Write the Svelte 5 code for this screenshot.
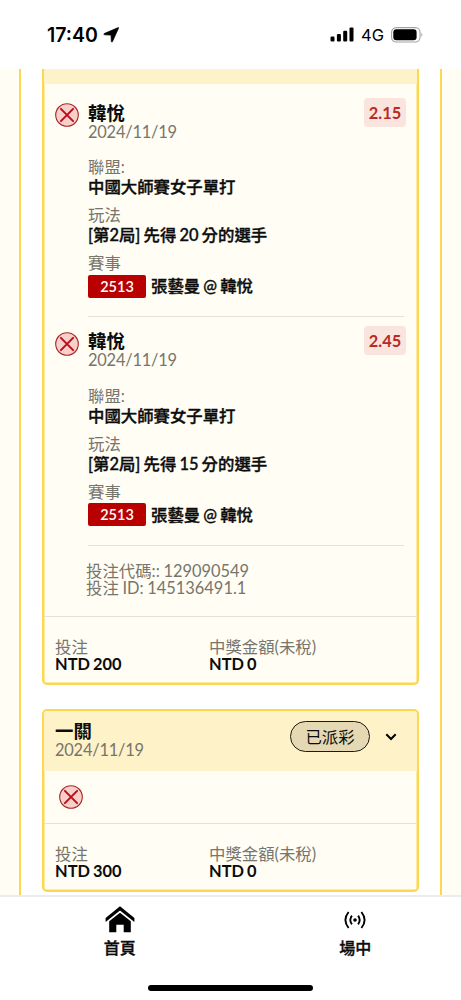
<script>
  const legs = [
    {
      player: '韓悅',
      date: '2024/11/19',
      odds: '2.15',
      league: '中國大師賽女子單打',
      market: '[第2局] 先得 20 分的選手',
      code: '2513',
      match: '張藝曼 @ 韓悅'
    },
    {
      player: '韓悅',
      date: '2024/11/19',
      odds: '2.45',
      league: '中國大師賽女子單打',
      market: '[第2局] 先得 15 分的選手',
      code: '2513',
      match: '張藝曼 @ 韓悅'
    }
  ];

  let activeTab = $state('home');
</script>

{#snippet lostIcon()}
  <svg class="lost" viewBox="0 0 24 24" width="24" height="24">
    <circle cx="12" cy="12" r="11.3" fill="#f9cfca" stroke="#a8262a" stroke-width="1.1" />
    <path d="M5.9 5.9 18.1 18.1M18.1 5.9 5.9 18.1" stroke="#b8101a" stroke-width="2" stroke-linecap="round" />
  </svg>
{/snippet}

{#snippet totals(stake, payout)}
  <div class="totals">
    <div class="total stake">
      <span class="label">投注</span>
      <span class="amount">NTD {stake}</span>
    </div>
    <div class="total">
      <span class="label">中獎金額(未稅)</span>
      <span class="amount">NTD {payout}</span>
    </div>
  </div>
{/snippet}

<div class="screen">
  <header class="status-bar">
    <div class="clock">
      <span>17:40</span>
      <svg viewBox="0 0 16 16" width="16" height="16">
        <path d="M15.2.6Q15.9.3 15.5 1.2L9.5 14.6Q8.8 15.8 8.3 14.4L8 8.1 1.4 7.8Q.2 7.2 1.3 6.5Z" fill="#000" stroke="#000" stroke-width=".7" stroke-linejoin="round" />
      </svg>
    </div>
    <div class="signals">
      <svg viewBox="0 0 24 15" width="24" height="15">
        <rect x=".5" y="9.6" width="4" height="4.9" rx="1.1" />
        <rect x="6.9" y="6.9" width="4" height="7.6" rx="1.1" />
        <rect x="13.2" y="3.7" width="4" height="10.8" rx="1.1" />
        <rect x="19.5" y=".5" width="4" height="14" rx="1.1" />
      </svg>
      <span>4G</span>
      <svg viewBox="0 0 33 16" width="33" height="16">
        <rect x=".6" y=".6" width="28.4" height="14.4" rx="4.6" fill="none" stroke="#a3a3a3" stroke-width="1.1" />
        <rect x="2.3" y="2.3" width="23.3" height="11" rx="3" />
        <path d="M30.4 5.5q2 2.3 0 4.6z" fill="#a3a3a3" />
      </svg>
    </div>
  </header>

  <main>
    <div class="column">
      <section class="ticket open">
        <div class="strip"></div>
        <div class="legs">
          {#each legs as leg}
            <div class="leg">
              {@render lostIcon()}
              <div class="leg-body">
                <div class="leg-head">
                  <div>
                    <div class="name">{leg.player}</div>
                    <div class="date">{leg.date}</div>
                  </div>
                  <span class="odds">{leg.odds}</span>
                </div>
                <div class="field">
                  <div class="label">聯盟:</div>
                  <div class="value">{leg.league}</div>
                </div>
                <div class="field">
                  <div class="label">玩法</div>
                  <div class="value">{leg.market}</div>
                </div>
                <div class="field">
                  <div class="label">賽事</div>
                  <div class="value match">
                    <span class="code">{leg.code}</span>
                    <span>{leg.match}</span>
                  </div>
                </div>
              </div>
            </div>
          {/each}
        </div>
        <div class="ids">
          <div>投注代碼:: 129090549</div>
          <div>投注 ID: 145136491.1</div>
        </div>
        {@render totals(200, 0)}
      </section>

      <section class="ticket">
        <div class="ticket-head">
          <div>
            <div class="name">一關</div>
            <div class="date">2024/11/19</div>
          </div>
          <div class="ticket-state">
            <span class="badge">已派彩</span>
            <svg viewBox="0 0 12 8" width="12" height="8">
              <path d="M1.3 1.3 6 6 10.7 1.3" fill="none" stroke="#000" stroke-width="2" />
            </svg>
          </div>
        </div>
        <div class="results">{@render lostIcon()}</div>
        {@render totals(300, 0)}
      </section>
    </div>
  </main>

  <nav>
    <button class:active={activeTab === 'home'} onclick={() => (activeTab = 'home')}>
      <svg viewBox="0 0 30 27" width="30" height="27">
        <path d="M.6 12 15 .2 29.4 12V15.9L15 4.6.6 15.9Z" />
        <path d="M4.2 15.2 15 6.8 25.8 15.2V26.3H18.7V18.8H11.3V26.3H4.2Z" />
      </svg>
      <span>首頁</span>
    </button>
    <button class:active={activeTab === 'live'} onclick={() => (activeTab = 'live')}>
      <svg viewBox="0 0 22 27" width="22" height="27" fill="none" stroke="#000" stroke-width="1.9">
        <circle cx="11" cy="14" r="1.8" fill="#000" stroke="none" />
        <path d="M7.9 9.6Q4.7 14 7.9 18.4M14.1 9.6Q17.3 14 14.1 18.4" />
        <path d="M4.6 6Q-1.8 14 4.6 22M17.4 6Q23.8 14 17.4 22" />
      </svg>
      <span>場中</span>
    </button>
    <div class="home-bar"></div>
  </nav>
</div>

<style>
  :global(body) {
    margin: 0;
    background: #fff;
  }

  .screen {
    display: flex;
    flex-direction: column;
    height: 1000px;
    overflow: hidden;
    font-family: Lato, 'Noto Sans CJK TC', sans-serif;
    font-size: 16.4px;
    color: #0c0c0c;
  }

  svg {
    display: block;
    flex: none;
  }

  .status-bar {
    display: flex;
    justify-content: space-between;
    height: 69px;
    flex: none;
    box-sizing: border-box;
    padding: 23px 37px 0 47px;
    font-family: Inter, sans-serif;
    color: #000;
  }

  .clock,
  .signals {
    display: flex;
    align-items: center;
    height: 23px;
  }

  .clock {
    gap: 5px;
    font-size: 19.5px;
    font-weight: 600;
  }

  .signals {
    gap: 7px;
    font-size: 16.5px;
  }

  main {
    flex: 1;
    min-height: 0;
    overflow: hidden;
    background: #fffdf4;
    padding: 0 19px;
  }

  .column {
    height: 100%;
    box-sizing: border-box;
    background: #fff;
    border: solid #fbd850;
    border-width: 0 2px;
    padding: 0 21px;
  }

  .ticket {
    box-sizing: border-box;
    border: 2px solid #fbd850;
    border-radius: 5px;
    background: #fffdf4;
    box-shadow: inset 0 0 0 0.5px #fbd850;
    overflow: hidden;
    margin-bottom: 24px;
  }

  .ticket.open {
    border-top: 0;
    border-radius: 0 0 5px 5px;
    height: 616px;
  }

  .strip {
    height: 15px;
    background: #fef2c8;
  }

  .legs {
    padding: 4.5px 13px 0 11px;
  }

  .leg {
    display: flex;
    gap: 9px;
  }

  .leg .lost {
    margin-top: 14.5px;
  }

  .leg-body {
    flex: 1;
    height: 228.5px;
    box-sizing: border-box;
    padding-top: 14px;
    border-bottom: 1px solid #e4e2da;
  }

  .leg-head {
    display: flex;
    justify-content: space-between;
    margin-bottom: 16.5px;
  }

  .name {
    font-size: 18.4px;
    line-height: 20px;
    font-weight: 600;
  }

  .date {
    line-height: 18px;
    letter-spacing: -0.2px;
    color: #77756c;
  }

  .odds {
    width: 42px;
    height: 29px;
    margin: -5px -2px 0 0;
    border-radius: 4px;
    background: #fae5de;
    color: #b72a26;
    font-weight: 700;
    line-height: 29px;
    text-align: center;
  }

  .field {
    margin-bottom: 8px;
    line-height: 20px;
  }

  .label {
    color: #77756c;
  }

  .value {
    font-weight: 500;
    white-space: nowrap;
    word-spacing: -1px;
    -webkit-text-stroke: 0.35px currentColor;
  }

  .match {
    display: flex;
    align-items: center;
    gap: 5px;
    height: 26px;
  }

  .code {
    width: 58px;
    height: 23px;
    border-radius: 2px;
    background: #b90000;
    color: #fff;
    font-size: 14.5px;
    font-weight: 600;
    line-height: 23px;
    text-align: center;
    -webkit-text-stroke: 0;
  }

  .ids {
    height: 70.5px;
    box-sizing: border-box;
    padding: 16px 42px 0;
    line-height: 17.5px;
    color: #77756c;
    word-spacing: -0.5px;
  }

  .totals {
    display: flex;
    border-top: 1px solid #e4e2da;
    padding: 20.5px 11px 10px;
    line-height: 17.5px;
  }

  .total {
    display: flex;
    flex-direction: column;
  }

  .stake {
    width: 154px;
  }

  .amount {
    font-weight: 700;
    word-spacing: -1px;
  }

  .ticket-head {
    display: flex;
    justify-content: space-between;
    height: 60px;
    box-sizing: border-box;
    padding: 10px 20px 0 11px;
    background: #fef2c8;
  }

  .ticket-state {
    display: flex;
    align-items: center;
    gap: 15px;
    height: 31px;
  }

  .badge {
    width: 80px;
    height: 31px;
    box-sizing: border-box;
    border: 1px solid #1d1a10;
    border-radius: 16px;
    background: #e4d9b3;
    line-height: 29px;
    text-align: center;
  }

  .results {
    height: 52px;
    box-sizing: border-box;
    padding: 14px 14.5px;
  }

  nav {
    display: grid;
    grid-template-columns: 235.5px 235.5px;
    position: relative;
    flex: none;
    height: 105px;
    box-sizing: border-box;
    border-top: 2px solid #ececec;
    padding: 9px 0 0 2px;
    background: #fff;
  }

  button {
    display: flex;
    flex-direction: column;
    align-items: center;
    gap: 4px;
    height: 60px;
    padding: 0;
    border: 0;
    background: none;
    color: #0c0c0c;
    font-family: inherit;
    font-size: 16px;
    font-weight: 500;
    line-height: 22px;
    -webkit-text-stroke: 0.35px currentColor;
    cursor: pointer;
  }

  .home-bar {
    position: absolute;
    left: 148px;
    bottom: 9px;
    width: 165px;
    height: 6px;
    border-radius: 3px;
    background: #000;
  }
</style>
